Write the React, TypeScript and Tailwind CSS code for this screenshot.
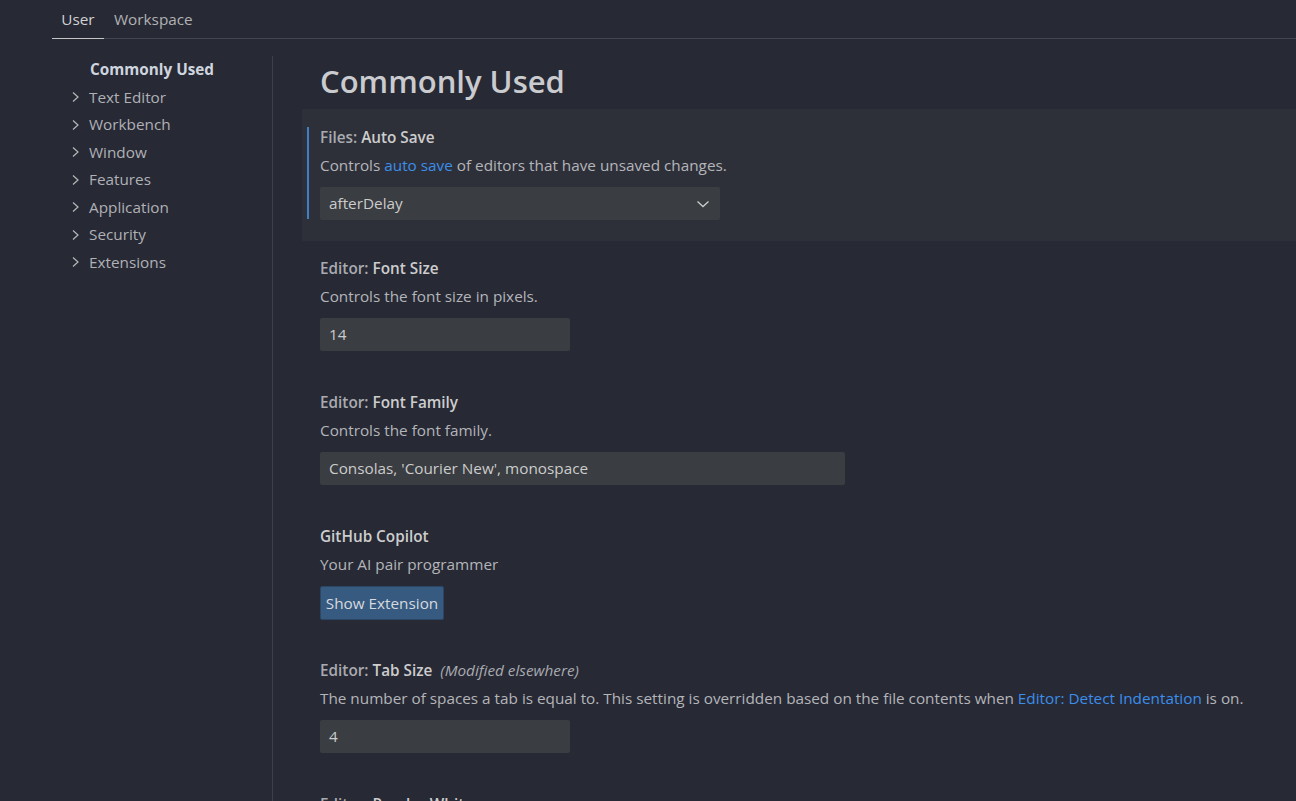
import React from "react";

const font = { fontFamily: '"Open Sans", "Noto Sans", sans-serif' };

function Chevron() {
  return (
    <svg width="10" height="12" viewBox="0 0 10 12" className="shrink-0">
      <polyline points="3,1.5 8,6 3,10.5" fill="none" stroke="#b8b8b8" strokeWidth="1.2" />
    </svg>
  );
}

function Title({ cat, name, extra }: { cat: string; name: string; extra?: string }) {
  return (
    <div className="h-[20px] leading-[20px] text-[15.3px] font-semibold whitespace-nowrap">
      {cat && <span className="text-[#a9abb0]">{cat} </span>}
      <span className="text-[#cdcdcd]">{name}</span>
      {extra && <span className="ml-[8px] italic font-normal text-[#a9abb0]">{extra}</span>}
    </div>
  );
}

function Desc({ children }: { children: React.ReactNode }) {
  return (
    <div className="mt-[8px] h-[20px] leading-[20px] text-[15.3px] text-[#b4b5b9] whitespace-nowrap">
      {children}
    </div>
  );
}

function Input({ value, w }: { value: string; w: string }) {
  return (
    <div className={`mt-[12px] h-[33px] ${w} bg-[#3a3d41] rounded-[2px] flex items-center pl-[9px] text-[15.3px] text-[#cccccc]`}>
      {value}
    </div>
  );
}

export default function App() {
  const items = ["Text Editor", "Workbench", "Window", "Features", "Application", "Security", "Extensions"];
  return (
    <div className="w-[1296px] h-[801px] overflow-hidden bg-[#272935] text-[#cccccc] flex flex-col" style={font}>
      <div className="pl-[52px] shrink-0">
        <div className="h-[39px] border-b border-[#44464f] flex items-end text-[15.3px]">
          <div className="h-[39px] w-[52px] flex items-center justify-center border-b-[1.5px] border-[#c4c4c4] -mb-[1px] text-[#d2d2d2]">
            User
          </div>
          <div className="h-[38px] flex items-center pl-[10px] text-[#b2b2b2]">Workspace</div>
        </div>
      </div>
      <div className="flex flex-1 min-h-0">
        <div className="w-[273px] shrink-0 pt-[17px] flex flex-col">
          <div className="flex-1 border-r border-[#3d404a] flex flex-col">
            <div className="h-[27.5px] shrink-0 flex items-center pl-[90px] text-[15.3px] font-bold text-[#cfd5de]">Commonly Used</div>
            {items.map((it) => (
              <div key={it} className="h-[27.5px] shrink-0 flex items-center pl-[70px] text-[15.3px] text-[#b0b1b5]">
                <Chevron />
                <span className="ml-[9px]">{it}</span>
              </div>
            ))}
          </div>
        </div>
        <div className="flex-1 pl-[29px] flex flex-col min-w-0 overflow-hidden">
          <div className="h-[70px] shrink-0 pt-[20px] pl-[18px] text-[31px] leading-[44px] font-semibold text-[#cacbcf] whitespace-nowrap">
            Commonly Used
          </div>
          <div className="h-[132px] shrink-0 bg-[#2e3039] pt-[18px] pl-[5px]">
            <div className="border-l-[2px] border-[#3f7fc4] pl-[11px] h-[92px]">
              <Title cat="Files:" name="Auto Save" />
              <Desc>
                Controls <span className="text-[#3b8eea]">auto save</span> of editors that have unsaved changes.
              </Desc>
              <div className="mt-[12px] h-[33px] w-[400px] bg-[#3a3d41] rounded-[2px] flex items-center justify-between pl-[9px] pr-[10px] text-[15.3px] text-[#cccccc]">
                <span>afterDelay</span>
                <svg width="14" height="8" viewBox="0 0 14 8">
                  <polyline points="1.5,1.5 7,6.5 12.5,1.5" fill="none" stroke="#cccccc" strokeWidth="1.3" />
                </svg>
              </div>
            </div>
          </div>
          <div className="h-[134px] shrink-0 pt-[17px] pl-[18px]">
            <Title cat="Editor:" name="Font Size" />
            <Desc>Controls the font size in pixels.</Desc>
            <Input value="14" w="w-[250px]" />
          </div>
          <div className="h-[134px] shrink-0 pt-[17px] pl-[18px]">
            <Title cat="Editor:" name="Font Family" />
            <Desc>Controls the font family.</Desc>
            <Input value="Consolas, 'Courier New', monospace" w="w-[525px]" />
          </div>
          <div className="h-[134px] shrink-0 pt-[17px] pl-[18px]">
            <Title cat="" name="GitHub Copilot" />
            <Desc>Your AI pair programmer</Desc>
            <div className="mt-[12px] h-[34px] w-[124px] bg-[#365a80] border border-[#2c4766] rounded-[2px] flex items-center justify-center text-[15.3px] text-[#d6d9de]">
              Show Extension
            </div>
          </div>
          <div className="h-[134px] shrink-0 pt-[17px] pl-[18px]">
            <Title cat="Editor:" name="Tab Size" extra="(Modified elsewhere)" />
            <Desc>
              The number of spaces a tab is equal to. This setting is overridden based on the file contents when{" "}
              <span className="text-[#3b8eea]">Editor: Detect Indentation</span> is on.
            </Desc>
            <Input value="4" w="w-[250px]" />
          </div>
          <div className="h-[134px] shrink-0 pt-[17px] pl-[18px]">
            <Title cat="Editor:" name="Render Whitespace" />
          </div>
        </div>
      </div>
    </div>
  );
}
